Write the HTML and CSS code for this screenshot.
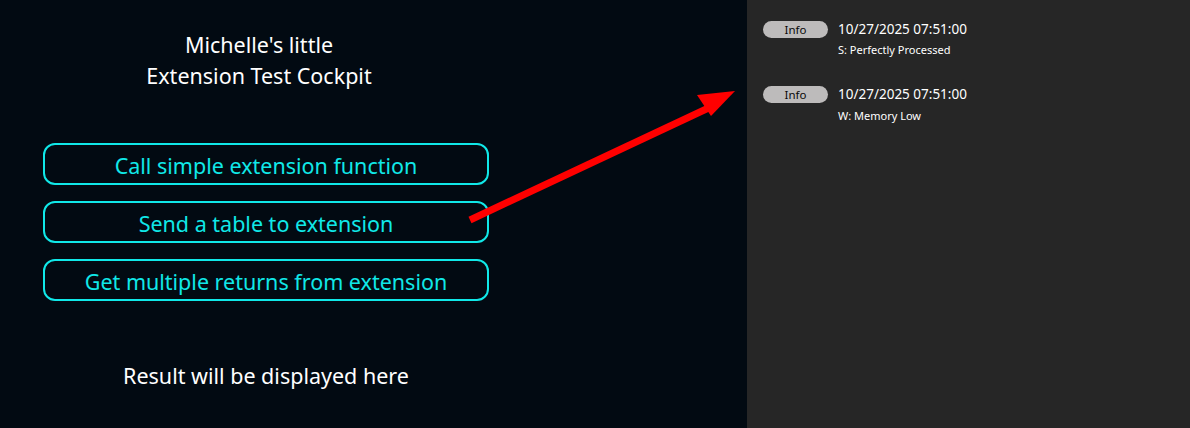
FILE: index.html
```html
<!DOCTYPE html>
<html>
<head>
<meta charset="utf-8">
<link rel="stylesheet" href="styles.css">
</head>
<body>
<div class="app">
  <main class="cockpit">
    <h1 class="title">Michelle's little<br>Extension Test Cockpit</h1>
    <div class="actions">
      <button class="action">Call simple extension function</button>
      <button class="action">Send a table to extension</button>
      <button class="action">Get multiple returns from extension</button>
    </div>
    <p class="result">Result will be displayed here</p>
    <svg class="arrow" width="280" height="140" viewBox="0 0 280 140">
      <line x1="3" y1="132" x2="250" y2="16" stroke="#ff0000" stroke-width="7"/>
      <polygon points="268,3 230,7 244,28" fill="#ff0000"/>
    </svg>
  </main>
  <aside class="log">
    <div class="entry">
      <span class="badge">Info</span>
      <span class="stamp">10/27/2025 07:51:00</span>
      <span class="msg">S: Perfectly Processed</span>
    </div>
    <div class="entry">
      <span class="badge">Info</span>
      <span class="stamp">10/27/2025 07:51:00</span>
      <span class="msg">W: Memory Low</span>
    </div>
  </aside>
</div>
</body>
</html>
```
FILE: styles.css
```css
html, body {
  margin: 0;
  padding: 0;
  height: 100%;
}
body {
  font-family: "Noto Sans", "Open Sans", sans-serif;
  background: #262626;
}
.app {
  display: flex;
  width: 1190px;
  height: 428px;
}
.cockpit {
  position: relative;
  width: 747px;
  flex: none;
  background: #020a12;
  display: flex;
  flex-direction: column;
  padding-top: 29px;
  box-sizing: border-box;
}
.title {
  margin: 0;
  width: 518px;
  text-align: center;
  color: #ffffff;
  font-weight: 400;
  font-size: 21.5px;
  line-height: 31px;
}
.actions {
  margin: 52px 0 0 43px;
  width: 446px;
  display: flex;
  flex-direction: column;
  gap: 16px;
}
.action {
  height: 42px;
  border: 2px solid #10e8e8;
  border-radius: 12px;
  background: transparent;
  color: #10e8e8;
  font-family: inherit;
  font-size: 21.5px;
  padding: 3px 0 0 0;
}
.result {
  margin: 61px 0 0 0;
  width: 532px;
  text-align: center;
  color: #ffffff;
  font-size: 21.5px;
  line-height: 28px;
}
.arrow {
  position: absolute;
  left: 467px;
  top: 88px;
}
.log {
  flex: 1;
  padding: 20px 0 0 16px;
  display: flex;
  flex-direction: column;
  gap: 27px;
}
.entry {
  display: grid;
  grid-template-columns: 65px auto;
  column-gap: 10px;
  row-gap: 2px;
  align-items: center;
}
.entry + .entry .msg {
  margin-top: 1px;
}
.badge {
  height: 17px;
  border-radius: 9px;
  background: #bdbbbb;
  color: #0a0a0a;
  font-size: 11.5px;
  line-height: 17px;
  text-align: center;
}
.stamp {
  color: #ffffff;
  font-size: 13.5px;
  line-height: 19px;
}
.msg {
  grid-column: 2;
  color: #ffffff;
  font-size: 11px;
  line-height: 17px;
}
```
